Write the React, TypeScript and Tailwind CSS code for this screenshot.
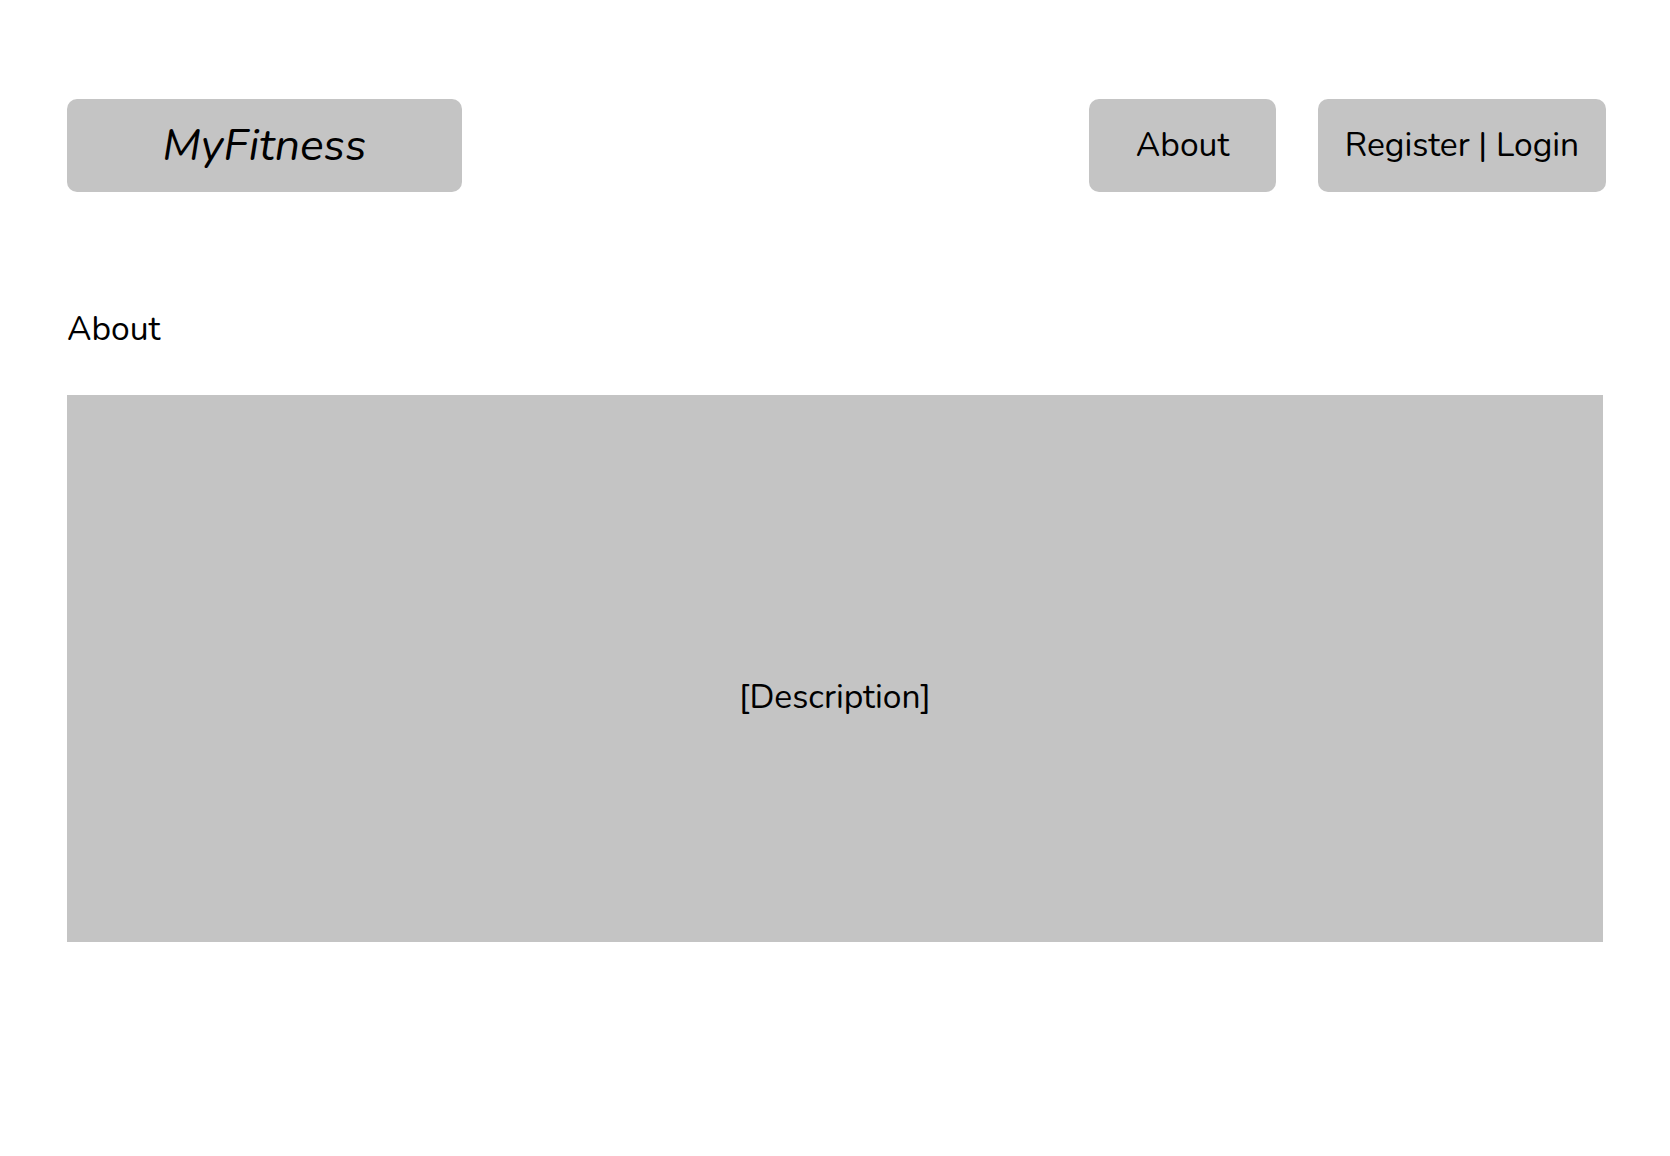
import React from 'react';

const font = { fontFamily: '"Nunito", "Lato", "Noto Sans", sans-serif' };

export default function App() {
  return (
    <div className="min-h-screen bg-white text-black pl-[67px] pr-[66px] pt-[99px]" style={font}>
      <header className="flex items-center">
        <div className="w-[395px] h-[93px] rounded-[10px] bg-[#c4c4c4] flex items-center justify-center pt-[2px] text-[44.5px] italic">
          MyFitness
        </div>
        <div className="flex-1" />
        <button className="w-[187px] h-[93px] rounded-[10px] bg-[#c4c4c4] flex items-center justify-center text-[33.6px]">
          About
        </button>
        <button className="ml-[42px] w-[288px] h-[93px] rounded-[10px] bg-[#c4c4c4] flex items-center justify-center text-[33.6px] mr-[-2px]">
          Register | Login
        </button>
      </header>

      <h1 className="mt-[117px] text-[33.6px] leading-[40px]">About</h1>

      <section className="mt-[46px] w-[1536px] h-[547px] bg-[#c4c4c4] flex items-center justify-center pt-[58px] text-[33.6px]">
        [Description]
      </section>
    </div>
  );
}
